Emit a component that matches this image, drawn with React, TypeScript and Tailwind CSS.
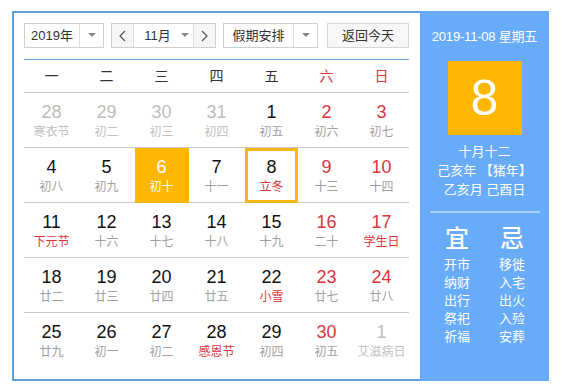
import React from "react";

type Cell = { d: number; l: string; other?: boolean; red?: boolean; lred?: boolean; sel?: boolean; today?: boolean };

const rows: Cell[][] = [
  [
    { d: 28, l: "寒衣节", other: true },
    { d: 29, l: "初二", other: true },
    { d: 30, l: "初三", other: true },
    { d: 31, l: "初四", other: true },
    { d: 1, l: "初五" },
    { d: 2, l: "初六", red: true },
    { d: 3, l: "初七", red: true },
  ],
  [
    { d: 4, l: "初八" },
    { d: 5, l: "初九" },
    { d: 6, l: "初十", sel: true },
    { d: 7, l: "十一" },
    { d: 8, l: "立冬", lred: true, today: true },
    { d: 9, l: "十三", red: true },
    { d: 10, l: "十四", red: true },
  ],
  [
    { d: 11, l: "下元节", lred: true },
    { d: 12, l: "十六" },
    { d: 13, l: "十七" },
    { d: 14, l: "十八" },
    { d: 15, l: "十九" },
    { d: 16, l: "二十", red: true },
    { d: 17, l: "学生日", red: true, lred: true },
  ],
  [
    { d: 18, l: "廿二" },
    { d: 19, l: "廿三" },
    { d: 20, l: "廿四" },
    { d: 21, l: "廿五" },
    { d: 22, l: "小雪", lred: true },
    { d: 23, l: "廿七", red: true },
    { d: 24, l: "廿八", red: true },
  ],
  [
    { d: 25, l: "廿九" },
    { d: 26, l: "初一" },
    { d: 27, l: "初二" },
    { d: 28, l: "感恩节", lred: true },
    { d: 29, l: "初四" },
    { d: 30, l: "初五", red: true },
    { d: 1, l: "艾滋病日", other: true },
  ],
];

const weekdays = ["一", "二", "三", "四", "五", "六", "日"];

function Caret() {
  return (
    <svg width="8" height="5" viewBox="0 0 8 5">
      <path d="M0 0 L8 0 L4 4 Z" fill="#888" />
    </svg>
  );
}

function Chevron({ dir }: { dir: "l" | "r" }) {
  return (
    <svg width="7" height="12" viewBox="0 0 7 12">
      <path
        d={dir === "l" ? "M6 1 L1 6 L6 11" : "M1 1 L6 6 L1 11"}
        stroke="#555"
        strokeWidth="1.2"
        fill="none"
      />
    </svg>
  );
}

function DayCell({ c }: { c: Cell }) {
  let numColor = "text-[#111]";
  let lunColor = "text-[#a0a0a0]";
  if (c.other) {
    numColor = "text-[#bdbdbd]";
    lunColor = "text-[#c0c0c0]";
  } else if (c.red) numColor = "text-[#d9353d]";
  if (c.lred && !c.other) lunColor = "text-[#d9353d]";
  if (c.sel) {
    numColor = "text-white";
    lunColor = "text-white";
  }
  return (
    <div className="flex items-center justify-center h-[55px]">
      <div
        className={
          "flex flex-col items-center justify-center " +
          (c.sel
            ? "w-[54px] h-[55px] bg-[#fdb700]"
            : c.today
            ? "w-[53px] h-[55px] border-[3px] border-[#f6b614]"
            : "w-[54px] h-[55px]")
        }
      >
        <div className={"text-[18px] leading-[20px] " + numColor} style={{ fontFamily: "'Liberation Sans', Arial, sans-serif" }}>
          {c.d}
        </div>
        <div className={"text-[12px] leading-[16px] mt-[2px] " + lunColor}>{c.l}</div>
      </div>
    </div>
  );
}

export default function App() {
  return (
    <div
      className="w-[562px] h-[390px] bg-white pl-[12px] pt-[11px]"
      style={{ fontFamily: "'Liberation Sans', 'Noto Sans CJK SC', sans-serif" }}
    >
      <div className="flex h-[370px]">
        <div className="w-[408px] h-[370px] border-2 border-r-0 border-[#5e9fe3] pl-[10px] pt-[10px]">
          <div className="w-[385px]">
            {/* toolbar */}
            <div className="flex h-[25px] text-[13px] text-[#333]">
              <div className="w-[80px] h-[25px] flex border border-[#cfcfcf] bg-white">
                <div className="flex-1 flex items-center justify-center">2019年</div>
                <div className="w-[24px] border-l border-[#dcdcdc] flex items-center justify-center">
                  <Caret />
                </div>
              </div>
              <div className="ml-[7px] w-[105px] h-[25px] flex border border-[#cfcfcf] bg-white">
                <div className="w-[22px] bg-[#f6f6f6] border-r border-[#dcdcdc] flex items-center justify-center">
                  <Chevron dir="l" />
                </div>
                <div className="flex-1 flex items-center justify-center gap-[10px] pl-[6px]">
                  <span>11月</span>
                  <Caret />
                </div>
                <div className="w-[22px] bg-[#f6f6f6] border-l border-[#dcdcdc] flex items-center justify-center">
                  <Chevron dir="r" />
                </div>
              </div>
              <div className="ml-[7px] w-[95px] h-[25px] flex border border-[#cfcfcf] bg-white">
                <div className="flex-1 flex items-center justify-center">假期安排</div>
                <div className="w-[24px] border-l border-[#dcdcdc] flex items-center justify-center">
                  <Caret />
                </div>
              </div>
              <div className="ml-[9px] w-[82px] h-[25px] border border-[#d6d6d6] bg-[#f7f7f7] flex items-center justify-center">
                返回今天
              </div>
            </div>
            <div className="mt-[11px] h-[1px] bg-[#6ea6e0]" />
            {/* weekday header */}
            <div className="grid grid-cols-7 h-[33px] border-b border-[#c8c8c8] text-[14px]">
              {weekdays.map((w, i) => (
                <div
                  key={w}
                  className={"flex items-center justify-center " + (i >= 5 ? "text-[#d9353d]" : "text-[#333]")}
                >
                  {w}
                </div>
              ))}
            </div>
            {rows.map((r, ri) => (
              <div
                key={ri}
                className={"grid grid-cols-7 " + (ri < rows.length - 1 ? "border-b border-[#c8c8c8] h-[55px]" : "h-[55px]")}
              >
                {r.map((c, ci) => (
                  <DayCell key={ci} c={c} />
                ))}
              </div>
            ))}
          </div>
        </div>
        <div className="w-[129px] h-[370px] bg-[#67abf9] flex flex-col items-center text-white">
          <div className="mt-[17px] text-[13px] leading-[17px] tracking-[-0.2px]">2019-11-08 星期五</div>
          <div className="mt-[16px] w-[74px] h-[74px] bg-[#fdb700] flex items-center justify-center text-[50px] leading-none" style={{ fontFamily: "'Liberation Sans', Arial, sans-serif" }}>
            8
          </div>
          <div className="mt-[7px] text-[13px] leading-[19px] text-center">
            <div>十月十二</div>
            <div>己亥年 【猪年】</div>
            <div>乙亥月 己酉日</div>
          </div>
          <div className="mt-[12px] w-[110px] h-[2px] bg-[#a9d0fb]" />
          <div className="mt-[12px] flex gap-[29px]">
            <div className="flex flex-col items-center w-[26px]">
              <div className="text-[24px] leading-[28px] font-medium">宜</div>
              <div className="mt-[3px] text-[13px] leading-[18px] flex flex-col items-center">
                <span>开市</span>
                <span>纳财</span>
                <span>出行</span>
                <span>祭祀</span>
                <span>祈福</span>
              </div>
            </div>
            <div className="flex flex-col items-center w-[26px]">
              <div className="text-[24px] leading-[28px] font-medium">忌</div>
              <div className="mt-[3px] text-[13px] leading-[18px] flex flex-col items-center">
                <span>移徙</span>
                <span>入宅</span>
                <span>出火</span>
                <span>入殓</span>
                <span>安葬</span>
              </div>
            </div>
          </div>
        </div>
      </div>
    </div>
  );
}
